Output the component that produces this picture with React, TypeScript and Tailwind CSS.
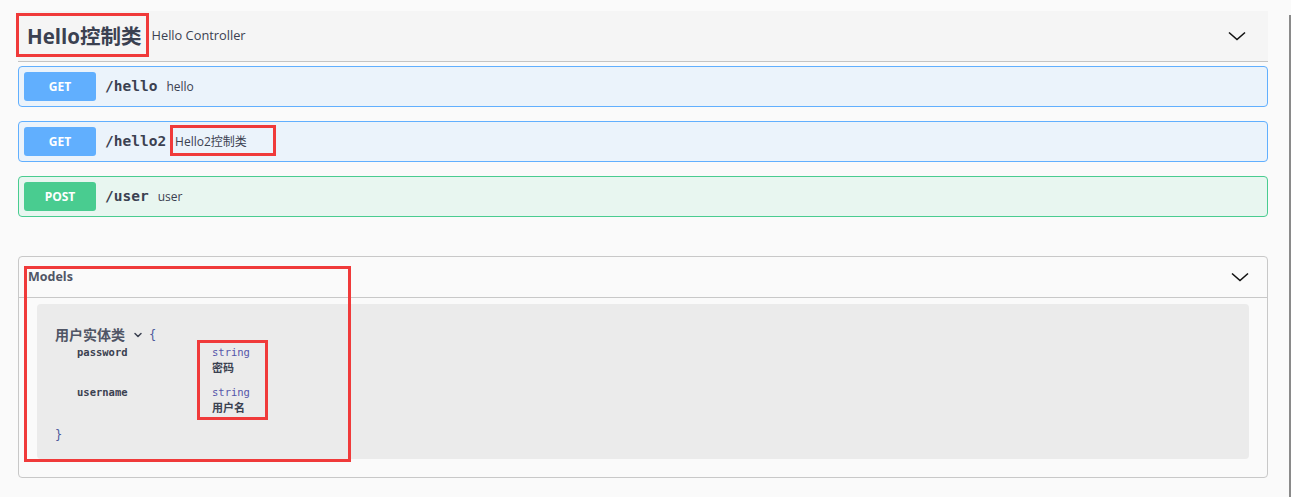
import { ChevronDown } from "lucide-react";

const ops = [
  { method: "GET", path: "/hello", desc: "hello", tone: "get", mark: false },
  { method: "GET", path: "/hello2", desc: "Hello2控制类", tone: "get", mark: true },
  { method: "POST", path: "/user", desc: "user", tone: "post", mark: false },
];

const sans = "font-['Open_Sans','Noto_Sans_CJK_SC',sans-serif]";
const mono = "font-['DejaVu_Sans_Mono',monospace]";

const Chevron = () => (
  <svg width="18" height="10" viewBox="0 0 18 10" fill="none">
    <path d="M1 1.5 L9 8.5 L17 1.5" stroke="#111" strokeWidth="1.6" />
  </svg>
);

export default function App() {
  return (
    <div className={`flex min-h-[497px] bg-[#fafafa] text-[#3b4151] ${sans}`}>
      <div className="w-[1289px] pl-[18px] pr-[21px] pt-[11px]">
        {/* tag header */}
        <div className="flex h-[51px] items-center border-b border-[#c4c4c4] bg-[#f5f5f5] pl-[9px] pr-[22px]">
          <span className="relative text-[20.5px] font-bold leading-none">
            Hello控制类
            <span className="absolute -left-[11px] -right-[7px] -top-[13px] -bottom-[11px] border-[3px] border-[#f03a3a]" />
          </span>
          <span className="ml-[10px] text-[12.8px]">Hello Controller</span>
          <span className="ml-auto">
            <Chevron />
          </span>
        </div>

        {/* operations */}
        <div className="mt-[4px] flex flex-col gap-[14px]">
          {ops.map((op) => (
            <div
              key={op.path}
              className={`flex h-[41px] items-center rounded-[4px] border px-[5px] ${
                op.tone === "get"
                  ? "border-[#61affe] bg-[#ebf3fb]"
                  : "border-[#49cc90] bg-[#e8f6f0]"
              }`}
            >
              <span
                className={`flex h-[29px] w-[72px] items-center justify-center rounded-[3px] text-[12px] font-bold text-white ${
                  op.tone === "get" ? "bg-[#61affe]" : "bg-[#49cc90]"
                }`}
              >
                {op.method}
              </span>
              <span className={`ml-[9px] text-[14.5px] font-semibold ${mono}`}>{op.path}</span>
              {op.mark ? (
                <span className="relative ml-[9px] text-[12px]">
                  {op.desc}
                  <span className="absolute -left-[5px] -right-[29px] -top-[8px] -bottom-[5px] border-[3px] border-[#f03a3a]" />
                </span>
              ) : (
                <span className="ml-[9px] text-[12px]">{op.desc}</span>
              )}
            </div>
          ))}
        </div>

        {/* models */}
        <div className="relative mt-[39px] rounded-[4px] border border-[#c8c8c8]">
          <div className="flex h-[41px] items-center border-b border-[#c8c8c8] pl-[9px] pr-[18px]">
            <span className="text-[12.5px] font-bold text-[#505565]">Models</span>
            <span className="ml-auto">
              <Chevron />
            </span>
          </div>
          <div className="mx-[18px] mb-[18px] mt-[6px] rounded-[4px] bg-[#ebebeb] pb-[15px] pl-[18px] pt-[20px]">
            <div className="flex items-center">
              <span className="text-[14px] font-bold text-[#505565]">用户实体类</span>
              <ChevronDown className="ml-[7px] h-[12px] w-[12px]" strokeWidth={3} />
              <span className={`ml-[5px] text-[12px] text-[#4c5a9c] ${mono}`}>{"{"}</span>
            </div>
            <div className="relative w-[240px]">
              <div className="flex">
                <span className={`ml-[22px] w-[135px] text-[10.5px] font-semibold ${mono}`}>password</span>
                <div className="flex flex-col">
                  <span className={`text-[10.5px] text-[#55a] ${mono}`}>string</span>
                  <span className="text-[11px] font-bold leading-[14px]">密码</span>
                </div>
              </div>
              <div className="mt-[10px] flex">
                <span className={`ml-[22px] w-[135px] text-[10.5px] font-semibold ${mono}`}>username</span>
                <div className="flex flex-col">
                  <span className={`text-[10.5px] text-[#55a] ${mono}`}>string</span>
                  <span className="text-[11px] font-bold leading-[14px]">用户名</span>
                </div>
              </div>
              <span className="absolute left-[142px] top-[-5px] h-[80px] w-[71px] border-[3px] border-[#f03a3a]" />
            </div>
            <div className={`mt-[11px] text-[12px] text-[#4c5a9c] ${mono}`}>{"}"}</div>
          </div>
          <span className="absolute left-[5px] top-[9px] h-[196px] w-[327px] border-[3px] border-[#f03a3a]" />
        </div>
      </div>
      <div className="mt-[15px] w-[2px] bg-[#8a8a8a]" />
    </div>
  );
}
